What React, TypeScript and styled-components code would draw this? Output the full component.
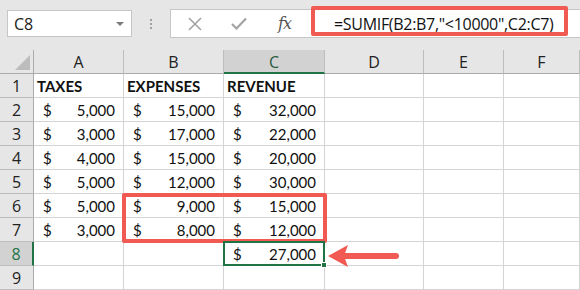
import React from "react";
import styled, { createGlobalStyle } from "styled-components";

const Global = createGlobalStyle`
  html, body { margin: 0; padding: 0; background: #ffffff; overflow: hidden; }
  * { box-sizing: border-box; }
`;

const Root = styled.div`
  position: relative;
  width: 580px;
  height: 290px;
  overflow: hidden;
  background: #ffffff;
`;

const Toolbar = styled.div`
  height: 50px;
  background: #e6e6e6;
  display: flex;
  align-items: flex-start;
  padding: 10px 0 0 7px;
`;

const NameBox = styled.div`
  width: 125px;
  height: 27px;
  background: #fff;
  border: 1px solid #c6c6c6;
  display: flex;
  align-items: center;
  justify-content: space-between;
  padding: 0 7px 0 6px;
  font-family: "Open Sans", sans-serif;
  font-size: 16px;
  color: #222;
`;

const Caret = styled.span`
  width: 0;
  height: 0;
  border-left: 4px solid transparent;
  border-right: 4px solid transparent;
  border-top: 4px solid #7a7a7a;
`;

const Dots = styled.div`
  width: 38px;
  height: 27px;
  display: flex;
  flex-direction: column;
  align-items: center;
  justify-content: center;
  gap: 2px;
  span {
    width: 2px;
    height: 2px;
    background: #a0a0a0;
  }
`;

const FormulaBar = styled.div`
  flex: 1;
  height: 29px;
  margin-top: -1px;
  background: #fff;
  border: 1px solid #c6c6c6;
  border-right: none;
  display: flex;
  align-items: center;
  padding-left: 17px;
`;

const IconSlot = styled.div<{ $w: number }>`
  width: ${(p) => p.$w}px;
  display: flex;
  align-items: center;
  justify-content: flex-start;
`;

const Fx = styled.span`
  font-family: "DejaVu Serif", "Liberation Serif", serif;
  font-style: italic;
  font-size: 16px;
  color: #555;
  letter-spacing: -1px;
`;

const FormulaText = styled.span`
  font-family: "Open Sans", sans-serif;
  font-size: 16px;
  letter-spacing: -0.3px;
  color: #111;
  margin-left: 43px;
  white-space: nowrap;
`;

const Grid = styled.div`
  display: grid;
  grid-template-columns: 34px 90px 100px 101px 99px 80px 1fr;
  grid-auto-rows: 24px;
`;

const ColHead = styled.div<{ $sel?: boolean }>`
  background: ${(p) => (p.$sel ? "#d2d2d2" : "#e6e6e6")};
  border-right: 1px solid #bdbdbd;
  border-bottom: ${(p) => (p.$sel ? "2px solid #217346" : "1px solid #ababab")};
  display: flex;
  align-items: center;
  justify-content: center;
  font-family: "Open Sans", sans-serif;
  font-size: 16px;
  color: ${(p) => (p.$sel ? "#2a5a3e" : "#222")};
  padding-top: ${(p) => (p.$sel ? "1px" : "0")};
`;

const Corner = styled.div`
  background: #e6e6e6;
  border-right: 1px solid #ababab;
  border-bottom: 1px solid #ababab;
  display: flex;
  align-items: flex-end;
  justify-content: flex-end;
  padding: 0 3px 3px 0;
`;

const CornerTri = styled.span`
  width: 0;
  height: 0;
  border-left: 15px solid transparent;
  border-bottom: 15px solid #bcbcbc;
`;

const RowHead = styled.div<{ $sel?: boolean }>`
  background: ${(p) => (p.$sel ? "#d2d2d2" : "#e6e6e6")};
  border-bottom: 1px solid #bdbdbd;
  border-right: ${(p) => (p.$sel ? "2px solid #217346" : "1px solid #ababab")};
  display: flex;
  align-items: center;
  justify-content: center;
  font-family: "Open Sans", sans-serif;
  font-size: 16px;
  color: ${(p) => (p.$sel ? "#217346" : "#222")};
`;

const Cell = styled.div<{ $bold?: boolean }>`
  border-right: 1px solid #d4d4d4;
  border-bottom: 1px solid #d4d4d4;
  display: flex;
  align-items: center;
  justify-content: space-between;
  padding: 0 8px 0 ${(p) => (p.$bold ? "3px" : "9px")};
  font-family: Lato, "Liberation Sans", sans-serif;
  font-size: 15px;
  font-weight: ${(p) => (p.$bold ? 700 : 400)};
  color: #111;
  white-space: nowrap;
`;

const Overlay = styled.div<{ $x: number; $y: number; $w: number; $h: number }>`
  position: absolute;
  left: ${(p) => p.$x}px;
  top: ${(p) => p.$y}px;
  width: ${(p) => p.$w}px;
  height: ${(p) => p.$h}px;
  pointer-events: none;
`;

const RedBox = styled(Overlay)`
  border: 4px solid #f15a52;
  border-radius: 2px;
`;

const SelBox = styled(Overlay)`
  border: 2px solid #217346;
`;

const Handle = styled.span`
  position: absolute;
  right: -4px;
  bottom: -4px;
  width: 6px;
  height: 6px;
  background: #217346;
  border: 1px solid #fff;
`;

const fmt = (n: number) => n.toLocaleString("en-US");

const rows: (number | null)[][] = [
  [5000, 15000, 32000],
  [3000, 17000, 22000],
  [4000, 15000, 20000],
  [5000, 12000, 30000],
  [5000, 9000, 15000],
  [3000, 8000, 12000],
  [null, null, 27000],
  [null, null, null],
];

const cols = ["A", "B", "C", "D", "E", "F"];

function Money({ v }: { v: number | null }) {
  if (v === null) return <Cell />;
  return (
    <Cell>
      <span>$</span>
      <span>{fmt(v)}</span>
    </Cell>
  );
}

export default function App() {
  return (
    <Root>
      <Global />
      <Toolbar>
        <NameBox>
          <span>C8</span>
          <Caret />
        </NameBox>
        <Dots>
          <span />
          <span />
          <span />
        </Dots>
        <FormulaBar>
          <IconSlot $w={43}>
            <svg width="14" height="14" viewBox="0 0 14 14">
              <path d="M1 1 L13 13 M13 1 L1 13" stroke="#a3a3a3" strokeWidth="1.6" fill="none" />
            </svg>
          </IconSlot>
          <IconSlot $w={47}>
            <svg width="16" height="13" viewBox="0 0 16 13">
              <path d="M1 7 L5.5 11.5 L15 1.5" stroke="#a3a3a3" strokeWidth="2.2" fill="none" />
            </svg>
          </IconSlot>
          <Fx>fx</Fx>
          <FormulaText>=SUMIF(B2:B7,"&lt;10000",C2:C7)</FormulaText>
        </FormulaBar>
      </Toolbar>
      <Grid>
        <Corner>
          <CornerTri />
        </Corner>
        {cols.map((c) => (
          <ColHead key={c} $sel={c === "C"}>
            {c}
          </ColHead>
        ))}
        <RowHead>1</RowHead>
        <Cell $bold>TAXES</Cell>
        <Cell $bold>EXPENSES</Cell>
        <Cell $bold>REVENUE</Cell>
        <Cell />
        <Cell />
        <Cell />
        {rows.map((r, i) => (
          <React.Fragment key={i}>
            <RowHead $sel={i + 2 === 8}>{i + 2}</RowHead>
            {r.map((v, j) => (
              <Money key={j} v={v} />
            ))}
            <Cell />
            <Cell />
            <Cell />
          </React.Fragment>
        ))}
      </Grid>
      <RedBox $x={311} $y={6} $w={257} $h={30} />
      <RedBox $x={122} $y={193} $w={205} $h={50} />
      <SelBox $x={223} $y={241} $w={102} $h={25}>
        <Handle />
      </SelBox>
      <Overlay $x={326} $y={243} $w={74} $h={26}>
        <svg width="74" height="26" viewBox="0 0 74 26">
          <path d="M18 13 L70 13" stroke="#f15a52" strokeWidth="6" strokeLinecap="round" />
          <path d="M2 13 L22 2 L18 13 L22 24 Z" fill="#f15a52" />
        </svg>
      </Overlay>
    </Root>
  );
}
